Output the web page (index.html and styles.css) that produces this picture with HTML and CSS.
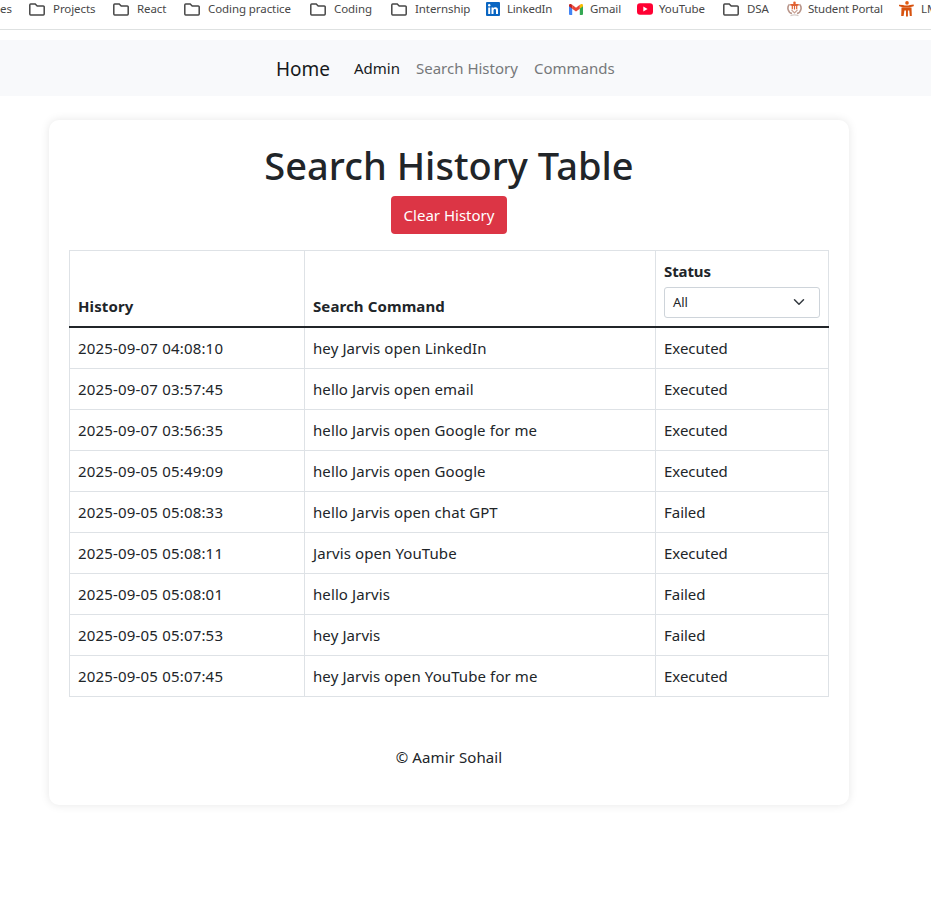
FILE: index.html
```html
<!DOCTYPE html>
<html lang="en">
<head>
<meta charset="utf-8">
<title>Search History</title>
<link rel="stylesheet" href="styles.css">
</head>
<body>
<svg class="defs" width="0" height="0"><symbol id="folder" viewBox="0 0 16 13"><path d="M1.700 1h4.500l2 2h6.100a.9.9 0 0 1 .9.9v7.200a.9.9 0 0 1-.9.9H1.700a.9.9 0 0 1-.9-.9V1.900a.9.9 0 0 1 .9-.9z" fill="none" stroke="#474747" stroke-width="1.500"/></symbol></svg>
<div class="bookmarks">
  <a class="bm bm-cut">es</a>
  <a class="bm bm-projects"><svg class="folder"><use href="#folder"/></svg><span>Projects</span></a>
  <a class="bm bm-react"><svg class="folder"><use href="#folder"/></svg><span>React</span></a>
  <a class="bm bm-practice"><svg class="folder"><use href="#folder"/></svg><span>Coding practice</span></a>
  <a class="bm bm-coding"><svg class="folder"><use href="#folder"/></svg><span>Coding</span></a>
  <a class="bm bm-intern"><svg class="folder"><use href="#folder"/></svg><span>Internship</span></a>
  <a class="bm bm-linkedin"><svg class="site" viewBox="0 0 14 14"><rect width="14" height="14" rx="1" fill="#0a66c2"/><circle cx="3.200" cy="3.300" r="1.200" fill="#fff"/><path d="M2.200 5.500h2V12h-2zM5.500 5.500h1.900v.9c.5-.8 1.200-1.100 2.100-1.100 1.800 0 2.500 1.200 2.500 3V12h-2V8.700c0-1-.3-1.600-1.100-1.600-.9 0-1.400.6-1.400 1.700V12h-2z" fill="#fff"/></svg><span>LinkedIn</span></a>
  <a class="bm bm-gmail"><svg class="site" viewBox="0 0 14 14"><path d="M0 3.500l3.200 2.300v7.200H1a1 1 0 0 1-1-1z" fill="#4285f4"/><path d="M14 3.500l-3.200 2.300v7.200H13a1 1 0 0 0 1-1z" fill="#34a853"/><path d="M10.800 2.800v3.900L14 4.300V3.500c0-1.400-1.400-1.700-2.200-1.200z" fill="#fbbc04"/><path d="M3.200 2.800v3.900L0 4.300V3.500c0-1.400 1.400-1.700 2.200-1.200z" fill="#c5221f"/><path d="M3.200 2.800L7 5.700l3.800-2.900v3.900L7 9.600 3.200 6.700z" fill="#ea4335"/></svg><span>Gmail</span></a>
  <a class="bm bm-youtube"><svg class="wide" viewBox="0 0 16 12"><rect y=".3" width="16" height="11.400" rx="3" fill="#ff0033"/><path d="M6.300 3.500v5l4.300-2.500z" fill="#fff"/></svg><span>YouTube</span></a>
  <a class="bm bm-dsa"><svg class="folder"><use href="#folder"/></svg><span>DSA</span></a>
  <a class="bm bm-portal"><svg class="crest" viewBox="0 0 14 16"><path d="M2 3.200A5.700 5.700 0 0 0 4.500 12.600M12 3.200A5.700 5.700 0 0 1 9.500 12.600" fill="none" stroke="#b8958a" stroke-width="1.600"/><path d="M3 14.600q4-1.400 8 0" fill="none" stroke="#d5ccc8" stroke-width="1.300"/><path d="M4 8.800l3 3 3-3" fill="none" stroke="#c9a092" stroke-width="1.200"/><path d="M2.600 3h8.800l-.4 1.800H9.800v3.500H8.600V5.100h-1v3.400H6.400V5.100h-1v3.200H4.200V4.800H3z" fill="#dd6236"/><circle cx="7" cy="1.900" r="1.300" fill="#e9602b"/></svg><span>Student Portal</span></a>
  <a class="bm bm-lms"><svg class="crest" viewBox="0 0 15 16"><circle cx="8" cy="1.900" r="1.800" fill="#e3590f"/><path d="M0 3.700l4 .3q3.500 1 7 0l3.500-.6q1 1.700-.8 2.200l-2.700.6H4L1 5.500Q-.5 5 0 3.700zM2.500 6.600h10l.3 8.400h-2l-.5-5.500H8.900v6H7v-6H5.400l-.8 5.500H2.200z" fill="#d7520f"/></svg><span>LMS</span></a>
</div>
<nav class="navbar">
  <a class="brand">Home</a>
  <a class="link link-admin">Admin</a>
  <a class="link link-history">Search History</a>
  <a class="link link-commands">Commands</a>
</nav>
<main class="card">
  <h1>Search History Table</h1>
  <button class="clear">Clear History</button>
  <table>
    <colgroup><col class="c-time"><col class="c-command"><col class="c-status"></colgroup>
    <thead>
      <tr><th>History</th><th>Search Command</th><th><div class="label">Status</div><div class="select"><span>All</span><svg width="12" height="12" viewBox="0 0 16 16"><path d="M2 5l6 6 6-6" fill="none" stroke="#343a40" stroke-width="2" stroke-linecap="round" stroke-linejoin="round"/></svg></div></th></tr>
    </thead>
    <tbody>
      <tr><td>2025-09-07 04:08:10</td><td>hey Jarvis open LinkedIn</td><td>Executed</td></tr>
      <tr><td>2025-09-07 03:57:45</td><td>hello Jarvis open email</td><td>Executed</td></tr>
      <tr><td>2025-09-07 03:56:35</td><td>hello Jarvis open Google for me</td><td>Executed</td></tr>
      <tr><td>2025-09-05 05:49:09</td><td>hello Jarvis open Google</td><td>Executed</td></tr>
      <tr><td>2025-09-05 05:08:33</td><td>hello Jarvis open chat GPT</td><td>Failed</td></tr>
      <tr><td>2025-09-05 05:08:11</td><td>Jarvis open YouTube</td><td>Executed</td></tr>
      <tr><td>2025-09-05 05:08:01</td><td>hello Jarvis</td><td>Failed</td></tr>
      <tr><td>2025-09-05 05:07:53</td><td>hey Jarvis</td><td>Failed</td></tr>
      <tr><td>2025-09-05 05:07:45</td><td>hey Jarvis open YouTube for me</td><td>Executed</td></tr>
    </tbody>
  </table>
  <footer>© Aamir Sohail</footer>
</main>
</body>
</html>
```
FILE: styles.css
```css
* { box-sizing: border-box; }
html { height: 100%; }
body { min-height: 100%; margin: 0; background: #fff; color: #212529; font: 15px/24px "Noto Sans", "Open Sans", sans-serif; }
.defs { display: block; }
.bookmarks { display: flex; width: 100%; height: 30px; border-bottom: 1px solid #dee1e1; overflow: hidden; font-size: 11.5px; line-height: 18px; letter-spacing: -.08px; color: #474747; }
.bm { display: flex; flex: none; height: 18px; align-items: center; white-space: nowrap; }
.bm svg { flex: none; }
.folder { width: 16px; height: 13px; margin-right: 8px; }
.site { width: 14px; height: 14px; margin-right: 7px; }
.wide { width: 16px; height: 12px; margin-right: 6px; }
.crest { width: 15px; height: 16px; margin-right: 6px; }
.bm-cut { width: 29px; }
.bm-projects { width: 84px; }
.bm-react { width: 71px; }
.bm-practice { width: 126px; }
.bm-coding { width: 81px; }
.bm-intern { width: 95px; }
.bm-linkedin { width: 83px; letter-spacing: -.2px; }
.bm-gmail { width: 68px; }
.bm-youtube { width: 86px; }
.bm-dsa { width: 64px; }
.bm-portal { width: 112px; letter-spacing: -.2px; }
.bm-lms { width: 60px; }
.bm-lms .crest { margin-right: 7px; }
.navbar { display: flex; align-items: center; height: 56px; margin-top: 10px; padding-left: 276px; background: #f8f9fb; white-space: nowrap; }
.brand { width: 78px; padding-top: 1px; font-size: 19px; color: #17191b; }
.link { color: #76787a; }
.link-admin { width: 62px; color: #17191b; }
.link-history { width: 118px; }
.card { width: 800px; height: 685px; margin: 24px 0 0 49px; padding: 20px; border-radius: 10px; box-shadow: 0 0 10px rgba(0, 0, 0, .1); text-align: center; }
h1 { margin: 0 0 8px; font-size: 38px; line-height: 48px; font-weight: 500; white-space: nowrap; height: 48px; padding-top: 1px; letter-spacing: .03px; }
.clear { display: block; width: 116px; height: 38px; margin: 0 auto 16px; padding: 0; border: 0; border-radius: 4px; background: #dc3545; color: #fff; font: inherit; }
table { width: 760px; table-layout: fixed; border-collapse: collapse; text-align: left; white-space: nowrap; }
.c-time { width: 235px; }
.c-command { width: 351px; }
.c-status { width: 173px; }
th, td { padding: 8px; border: 1px solid #dee2e6; }
td { height: 41px; }
td:nth-child(1) { letter-spacing: .18px; }
td:nth-child(2) { letter-spacing: .1px; }
td:nth-child(3) { letter-spacing: -.03px; }
thead th { height: 76px; padding: 7px 8px 8px; border-bottom: 2px solid #212529; vertical-align: bottom; font-weight: 700; letter-spacing: .1px; }
th:nth-child(3) { letter-spacing: -.1px; }
.label { margin-bottom: 4px; }
.select { display: flex; align-items: center; justify-content: space-between; height: 31px; padding: 0 14px 0 8px; border: 1px solid #ced4da; border-radius: 3px; font-size: 13px; font-weight: 400; }
footer { margin-top: 48px; letter-spacing: .1px; }
```
